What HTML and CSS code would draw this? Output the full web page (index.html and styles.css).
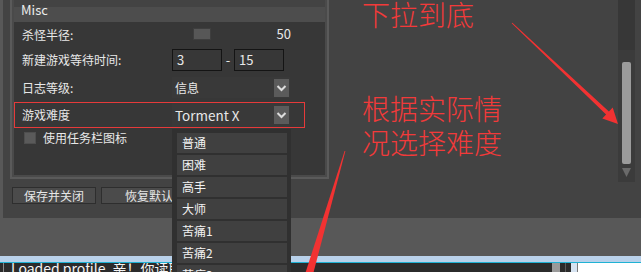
FILE: index.html
```html
<!DOCTYPE html>
<html>
<head>
<meta charset="utf-8">
<link rel="stylesheet" href="styles.css">
</head>
<body>
<div class="app">
  <div class="panel">
    <div class="left">
      <div class="group">
        <div class="group-top"></div>
        <div class="group-head">Misc</div>
        <div class="group-body">
          <div class="row r1">
            <span class="lbl">杀怪半径:</span>
            <div class="ctl slider"><span class="sthumb"></span><span class="val">50</span></div>
          </div>
          <div class="row r2">
            <span class="lbl">新建游戏等待时间:</span>
            <div class="ctl range"><span class="inp">3</span><span class="dash">-</span><span class="inp">15</span></div>
          </div>
          <div class="row r3">
            <span class="lbl">日志等级:</span>
            <div class="combo"><span class="ctext">信息</span><span class="abtn"><svg width="15" height="18" viewBox="0 0 15 18"><polyline points="3.5,7 7.5,11 11.5,7" fill="none" stroke="#dcdcdc" stroke-width="2"/></svg></span></div>
          </div>
          <div class="row r4">
            <span class="lbl">游戏难度</span>
            <div class="combo tall"><span class="ctext latin">Torment X</span><span class="abtn"><svg width="15" height="18" viewBox="0 0 15 18"><polyline points="3.5,7 7.5,11 11.5,7" fill="none" stroke="#dcdcdc" stroke-width="2"/></svg></span></div>
          </div>
          <div class="row r5">
            <span class="chk"></span><span class="chklbl">使用任务栏图标</span>
          </div>
        </div>
      </div>
      <div class="buttons">
        <button class="btn b1">保存并关闭</button>
        <button class="btn b2">恢复默认</button>
      </div>
    </div>
    <div class="spacer"></div>
    <div class="scroll">
      <div class="sbthumb"></div>
      <svg class="sbarrow" width="9" height="9" viewBox="0 0 9 9"><polygon points="0,0 9,0 4.5,9" fill="#6a6a6a"/></svg>
    </div>
  </div>
  <div class="gap"></div>
  <div class="bluebar"></div>
  <div class="status">
    <div class="log"><span>Loaded profile. 亲！你读取了配置</span></div>
    <div class="sb s1"></div>
    <div class="sb s2"></div>
    <div class="sb s3"></div>
    <div class="sb s4"></div>
    <div class="sb s5"></div>
    <div class="white"></div>
  </div>
</div>

<div class="dropdown">
  <div class="item">普通</div>
  <div class="item">困难</div>
  <div class="item">高手</div>
  <div class="item">大师</div>
  <div class="item">苦痛1</div>
  <div class="item">苦痛2</div>
  <div class="item">苦痛3</div>
</div>

<div class="note n1">下拉到底</div>
<div class="note n2">根据实际情<br>况选择难度</div>

<svg class="arrows" width="641" height="272" viewBox="0 0 641 272">
  <polygon points="512.35,22.64 608.9,111.6 612.7,107.6 618,124 602.3,118.4 606.1,114.4 511.65,23.36" fill="#f23232"/>
  <polygon points="345.4,151.1 311.4,280.4 303.6,278.6 344.6,150.9" fill="#f23232"/>
</svg>
</body>
</html>
```

FILE: styles.css
```css
* { box-sizing: border-box; }
html, body { margin: 0; padding: 0; }
body {
  width: 641px;
  height: 272px;
  overflow: hidden;
  background: #585858;
  font-family: "Noto Sans CJK SC", "Noto Sans", sans-serif;
  font-size: 12px;
  color: #e8e8e8;
  position: relative;
}
.app { display: flex; flex-direction: column; }

.panel {
  margin-left: 3px;
  height: 218px;
  background: #434343;
  display: flex;
}
.left { width: 327px; padding-left: 7px; }
.spacer { flex: 1; }

.group {
  width: 319px;
  border: 2px solid #5a5a5a;
  border-top: none;
  background: #4a4a4a;
  padding: 0 2px 2px 2px;
}
.group-top { height: 7px; background: #434343; }
.group-head {
  height: 15px;
  background: #4d4d4d;
  font-size: 13px;
  line-height: 6px;
  padding-left: 7px;
  color: #ececec;
}
.group-body {
  height: 153px;
  background: #373737;
  display: flex;
  flex-direction: column;
}
.row { display: flex; align-items: center; padding-left: 8px; }
.lbl { width: 150px; line-height: 16px; }
.r1 { margin-top: 2px; height: 21px; }
.r2 { margin-top: 4px; height: 22px; }
.r3 { margin-top: 6px; height: 21px; }
.r4 {
  margin-top: 4px;
  height: 26px;
  width: 291px;
  border: 1px solid #e63a3a;
  padding-left: 7px;
}
.r5 { margin-top: 2px; height: 16px; padding-left: 10px; }

.ctl { display: flex; align-items: center; }
.slider { width: 119px; height: 21px; }
.sthumb {
  margin-left: 21px;
  width: 18px;
  height: 12px;
  background: #575757;
  border: 1px solid #3e3e3e;
  margin-top: -2px;
}
.val { margin-left: auto; font-size: 13px; line-height: 16px; margin-top: -1px; }
.range { height: 22px; }
.inp {
  width: 50px;
  height: 22px;
  border: 1px solid #141414;
  padding-left: 4px;
  font-size: 13px;
  line-height: 20px;
}
.dash { width: 12px; text-align: center; font-size: 13px; line-height: 16px; }

.combo {
  width: 118px;
  height: 21px;
  background: #393939;
  display: flex;
  align-items: center;
  padding-left: 3px;
}
.combo.tall { height: 24px; }
.ctext { flex: 1; line-height: 16px; }
.ctext.latin { font-size: 13.5px; }
.abtn {
  width: 15px;
  height: 18px;
  background: #5b5b5b;
  margin-right: 1px;
  display: flex;
}

.chk { width: 12px; height: 12px; background: #5a5a5a; border: 1px solid #4e4e4e; }
.chklbl { margin-left: 7px; line-height: 16px; }

.buttons { display: flex; margin-top: 8px; padding-left: 2px; gap: 5px; }
.btn {
  height: 17px;
  background: #4b4b4b;
  border: 1px solid #2e2e2e;
  color: #e6e6e6;
  font-family: "Noto Sans CJK SC", sans-serif;
  font-size: 12px;
  line-height: 13px;
  padding: 0;
  margin: 0;
}
.b1 { width: 84px; }
.b2 { width: 96px; }

.scroll {
  width: 17px;
  height: 182px;
  margin-right: 6px;
  background: linear-gradient(#373737 0 50px, #3b3b3b 50px);
  display: flex;
  flex-direction: column;
  align-items: center;
  padding-top: 62px;
}
.sbthumb { width: 9px; height: 102px; background: #9b9b9b; border-radius: 2px; }
.sbarrow { margin-top: 4px; }

.gap { height: 38px; }
.bluebar { height: 7px; background: #b9d1ea; border-bottom: 1px solid #1fb2d4; }
.status { height: 9px; display: flex; overflow: hidden; background: #2b2b2b; }
.log {
  width: 552px;
  border-left: 1px solid #8a8a8a;
  margin-left: 3px;
  padding-left: 7px;
  font-size: 14px;
  line-height: 10px;
  color: #f4f4f4;
  white-space: nowrap;
  overflow: hidden;
}
.sb { height: 9px; }
.s1 { width: 8px; background: #9a9a9a; margin-left: -3px; }
.s2 { width: 5px; background: #2b2b2b; }
.s3 { width: 1px; background: #5a5a5a; }
.s4 { width: 5px; background: #2b2b2b; }
.s5 { width: 7px; background: #d6e3f1; border-right: 1px solid #7a7a7a; }
.white { flex: 1; background: #ffffff; }

.dropdown {
  position: absolute;
  left: 172px;
  top: 129px;
  width: 119px;
  height: 150px;
  background: #303030;
  padding: 4px 4px 0 5px;
}
.item {
  height: 20px;
  margin-bottom: 2px;
  background: #404040;
  padding-left: 5px;
  font-size: 12px;
  line-height: 20px;
  color: #f2f2f2;
}

.note {
  position: absolute;
  left: 362px;
  font-family: "Noto Sans CJK SC", sans-serif;
  font-weight: 300;
  font-size: 28px;
  line-height: 34px;
  color: #f23a3a;
  white-space: nowrap;
}
.n1 { top: -3px; }
.n2 { top: 91px; }
.arrows { position: absolute; left: 0; top: 0; pointer-events: none; }
```
